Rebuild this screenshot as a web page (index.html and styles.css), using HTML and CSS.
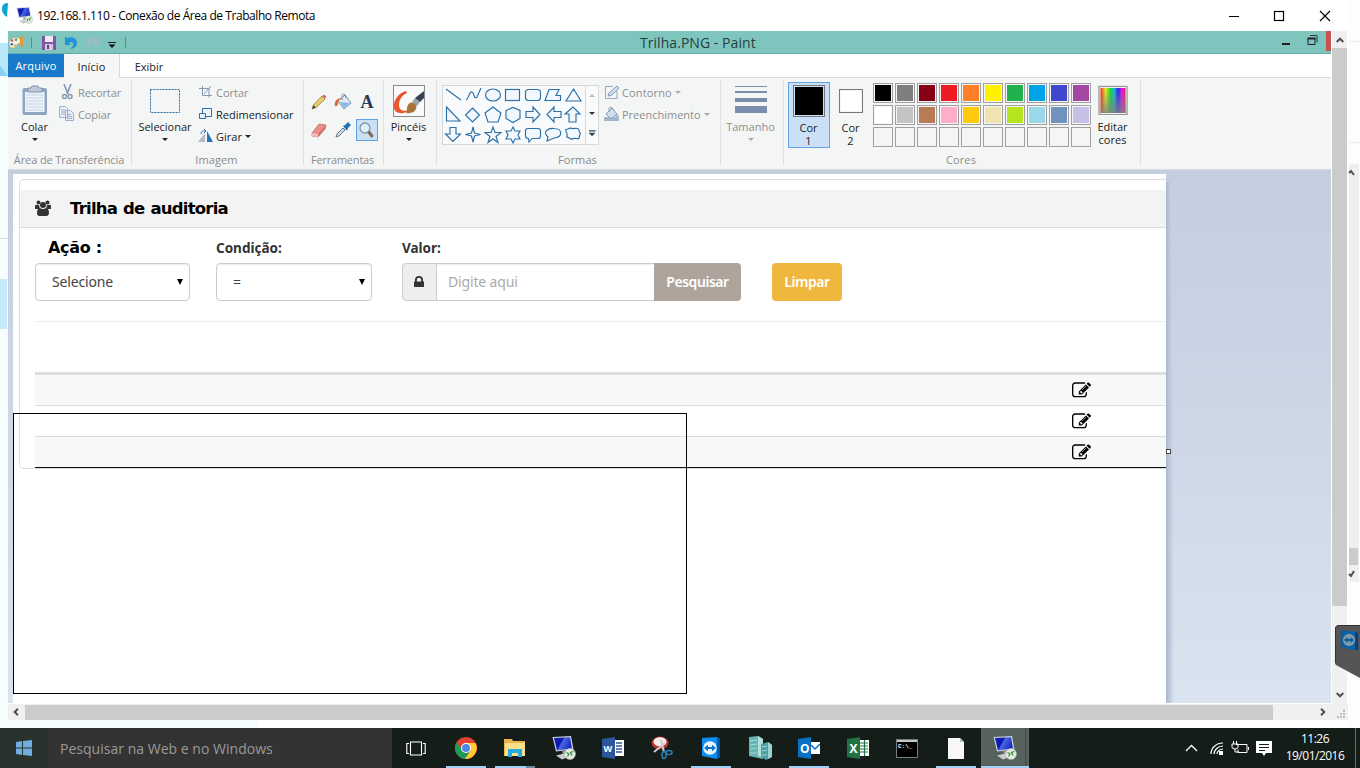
FILE: index.html
```html
<!DOCTYPE html>
<html lang="pt-BR">
<head>
<meta charset="utf-8">
<title>192.168.1.110 - Conexão de Área de Trabalho Remota</title>
<link rel="stylesheet" href="styles.css">
</head>
<body>
<svg class="defs" width="0" height="0">
  <defs>
    <linearGradient id="screen" x1="0" y1="0" x2="1" y2=".4"><stop offset="0" stop-color="#1226a8"/><stop offset=".45" stop-color="#0c17b4"/><stop offset=".55" stop-color="#4a68e0"/><stop offset="1" stop-color="#1a2fc4"/></linearGradient>
    <linearGradient id="rainbow" x1="0" x2="1" y1="0" y2="0"><stop offset="0" stop-color="#f21"/><stop offset=".2" stop-color="#ee2"/><stop offset=".4" stop-color="#1d3"/><stop offset=".55" stop-color="#1bd"/><stop offset=".7" stop-color="#22e"/><stop offset=".87" stop-color="#e1e"/><stop offset="1" stop-color="#f13"/></linearGradient>
    <linearGradient id="fade" x1="0" x2="0" y1="0" y2="1"><stop offset="0" stop-color="#808080" stop-opacity="0"/><stop offset="1" stop-color="#808080" stop-opacity=".85"/></linearGradient>
    <symbol id="rdp" viewBox="0 0 24 24">
      <path d="M.5 1L19 0l2.500 13.500L4 15.500z" fill="#c9cfde"/><path d="M2 2l16-.8 2 11.300-15 1.700z" fill="url(#screen)"/>
      <path d="M10 15l6-1 1 4-6 1z" fill="#8d9198"/><path d="M4 19.500l10-2.500 5 3-9 3.500z" fill="#c9cbd0"/>
      <circle cx="18" cy="18" r="5.500" fill="#e3eadf" stroke="#aab5a6" stroke-width=".5"/><path d="M14.500 16.500l2.500 1.500-1.500 2.500M21.500 15.500l-3 1 1.500 3" fill="none" stroke="#30913d" stroke-width="1.300"/>
    </symbol>
    <symbol id="tv" viewBox="0 0 20 22">
      <path d="M1 1l15-1 3 2v18l-3 2-15-3z" fill="#0c8ff0"/><path d="M16 0l3 2v18l-3 2z" fill="#0556ab"/><circle cx="9" cy="11" r="6.800" fill="#e9f3fc"/>
      <path d="M3 11l4-3.300v2.200h4V7.700l4 3.300-4 3.300v-2.200H7v2.200z" fill="#0c72cc"/>
    </symbol>
    <symbol id="edit" viewBox="0 0 1792 1792"><path d="M888 1184l116-116-152-152-116 116v56h96v96h56zm440-720q-16-16-33 1l-350 350q-17 17-1 33t33-1l350-350q17-17 1-33zm80 594v190q0 119-84.500 203.500t-203.500 84.500h-832q-119 0-203.500-84.500t-84.500-203.500v-832q0-119 84.500-203.500t203.500-84.500h832q63 0 117 25 15 7 18 23 3 17-9 29l-49 49q-14 14-32 8-23-6-45-6h-832q-66 0-113 47t-47 113v832q0 66 47 113t113 47h832q66 0 113-47t47-113v-126q0-13 9-22l64-64q15-15 35-7t20 29zm-96-738l288 288-672 672h-288v-288zm444 132l-92 92-288-288 92-92q28-28 68-28t68 28l152 152q28 28 28 68t-28 68z"/></symbol>
    <symbol id="chev" viewBox="0 0 8 6"><path d="M.7 5L4 1.700 7.300 5" fill="none" stroke="#505050" stroke-width="2"/></symbol>
  </defs>
</svg>
<div class="desktop">
  <aside class="left-edge">
    <svg width="8" height="728"><rect width="8" height="728" fill="#f5fdfe"/><path d="M0 0h8v42H0z" fill="#fbfefe"/><path d="M8 3c-5 0-6 3-6 6 0 4 2 6 5 8z" fill="#0ba5d9"/><path d="M0 43h8v33l-3-4-5-7z" fill="#b6e8fa"/><path d="M0 65l8 11H0z" fill="#86d3f2"/><path d="M0 238.500h8" stroke="#d5e3e6"/><rect y="279" width="7" height="50" fill="#c5ebfb"/></svg>
  </aside>

  <section class="remote">
    <header class="remote-bar">
      <svg class="remote-icon" width="17" height="17"><use href="#rdp"/></svg>
      <span class="remote-title">192.168.1.110 - Conexão de Área de Trabalho Remota</span>
      <svg class="remote-buttons" width="104" height="12"><path d="M1 6.500h10" stroke="#000"/><rect x="46.500" y="1.500" width="9" height="9" fill="none" stroke="#000" stroke-width="1.200"/><path d="M92 1l10 10M102 1L92 11" stroke="#000" stroke-width="1.200"/></svg>
    </header>
    <div class="remote-body">
      <main class="paint">
        <header class="paint-bar">
          <svg class="quick" width="120" height="22">
            <path d="M1 13C1 8 5 6 9 6.500c3 .5 5 3 4 5-1 2-3 .5-4 2-.5 2-1 3.500-4 3.500s-4-2-4-4z" fill="#f1eee5" stroke="#b3a685" stroke-width=".7"/><circle cx="4" cy="9.500" r="1.300" fill="#e4533d"/><circle cx="8" cy="8.800" r="1.300" fill="#43a845"/><circle cx="3.800" cy="13.300" r="1.300" fill="#4668c7"/><circle cx="7" cy="14.800" r="1.200" fill="#dcb52c"/><path d="M12 7l2-3 1 3v6l-1 4-2-3z" fill="#ec962e"/>
            <path d="M23.500 6v11M117.500 6v11" stroke="#5c8d88"/>
            <path d="M34 5h14v14H34z" fill="#7d57a3"/><path d="M37 5h8v6h-8z" fill="#eee9f5"/><path d="M37 13h8v6h-8z" fill="#d4c8e2"/><path d="M39 14h2v4h-2z" fill="#60418a"/>
            <path d="M57 11V5l2 2c5-2 10 0 10 5 0 3-3 6-7 6 4-3 5-7 0-7l-1 1 2 2h-6z" fill="#2293d8"/>
            <path d="M91 11V5l-2 2c-5-2-10 0-10 5 0 3 2 5 4 6-1-4-1-7 3-7l1 1-2 2h6z" fill="#9cbcc4"/>
            <path d="M100 11.500h8" stroke="#222"/><path d="M100.500 13.500h7l-3.500 3.500z" fill="#111"/>
          </svg>
          <span class="paint-title">Trilha.PNG - Paint</span>
          <svg class="paint-buttons" width="49" height="20"><path d="M0 12h8v2H0z" fill="#222"/><path d="M28 4.500h7v7" fill="none" stroke="#2a3f3d"/><path d="M26 7.500h7v6h-7z" fill="none" stroke="#222"/><path d="M25.500 7.500h8" stroke="#222" stroke-width="2"/><path d="M44 0h5v20h-5z" fill="#c75050"/></svg>
        </header>
        <nav class="tabs"><span class="tab file">Arquivo</span><span class="tab home">Início</span><span class="tab view">Exibir</span></nav>

        <div class="ribbon">
          <section class="group clip">
            <div class="group-body">
              <div class="big"><svg width="27" height="32"><rect x="1.500" y="3" width="24.500" height="27" rx="2" fill="#8fa3c3"/><path d="M4 7h19.500v20H4z" fill="#eef3fa"/><path d="M5 10h17M5 13h17M5 16h17M5 19h17M5 22h17M5 25h17" stroke="#c3d2e6"/><path d="M7 3h3l1-2h6l1 2h3v4H7z" fill="#bfc9d9" stroke="#8292ad"/></svg><span>Colar</span><i class="caret"></i></div>
              <ul class="small-list">
                <li class="off"><svg width="16" height="16"><path d="M5 0l4 10M12 0L8 10" stroke="#8699b5" stroke-width="1.700"/><circle cx="5.500" cy="12.500" r="2" fill="none" stroke="#8699b5" stroke-width="1.500"/><circle cx="11" cy="12.500" r="2" fill="none" stroke="#8699b5" stroke-width="1.500"/></svg><span>Recortar</span></li>
                <li class="off"><svg width="16" height="16"><path d="M.5.500h6l2 2v9h-8zM6.500 4.500h5l3 3v7h-8z" fill="#eaf0f8" stroke="#9baec9"/><path d="M2 4h4M2 6h4M2 8h4M8 8.500h4M8 10.500h5M8 12.500h5" stroke="#9baec9"/></svg><span>Copiar</span></li>
              </ul>
            </div>
            <footer class="transfer">Área de Transferência</footer>
          </section>

          <section class="group image">
            <div class="group-body">
              <div class="big sel"><svg width="32" height="32"><rect x=".5" y="4.500" width="29" height="23" fill="none" stroke="#2f6ea5" stroke-dasharray="2 1"/></svg><span>Selecionar</span><i class="caret"></i></div>
              <ul class="small-list">
                <li class="off"><svg width="16" height="16"><path d="M1 4.500h10v9M4.500 2v9.500H14M6 10l7-8" fill="none" stroke="#8498b8"/></svg><span>Cortar</span></li>
                <li><svg width="16" height="16"><path d="M4.500 2.500h9v8h-9z" fill="#eef6fc" stroke="#2d71ab"/><path d="M1.500 7.500h6v5h-6z" fill="#eef6fc" stroke="#2d71ab"/></svg><span>Redimensionar</span></li>
                <li><svg width="16" height="16"><path d="M0 14L7 5v9z" fill="#b1bac5"/><path d="M9 3l6 11H9z" fill="#2276b3"/><path d="M3 6c0-3 2-3 4-3M6 1l2 2-2 2" fill="none" stroke="#297bbb"/></svg><span>Girar</span><i class="caret"></i></li>
              </ul>
            </div>
            <footer>Imagem</footer>
          </section>

          <section class="group tools">
            <div class="group-body tool-grid">
              <svg width="18" height="18"><path d="M2 16l1.500-4L12 3l3 3-9 8.500z" fill="#efcc6b" stroke="#8b743f" stroke-width=".8"/><path d="M12 3l2-1.500 2.500 2L15 6z" fill="#d6756a"/><path d="M2 16l1.500-4 2.500 2.500z" fill="#554b3c"/></svg>
              <svg width="18" height="18"><path d="M4 8l7-6 6 8-7 6z" fill="#dfe8f1" stroke="#6d86a2" stroke-width=".9"/><path d="M8 7V3q0-2 2-2t2 4" fill="none" stroke="#7c93ac"/><path d="M1 13c-1-5 2-8 7-8-3 1-4 3-4 6-.5 1-1 3-3 2z" fill="#e16638"/><path d="M6 9l10 1-6 5z" fill="#83bcec"/></svg>
              <span class="letter">A</span>
              <svg width="18" height="18"><path d="M2 12L9 3l7 1-1 4-7 8-6-1z" fill="#ed8e88" stroke="#b5665f" stroke-width=".7"/><path d="M2 12l6 1v3l-6-1z" fill="#f5bfba"/><path d="M8 13l8-9-1 4-7 8z" fill="#cf716b"/></svg>
              <svg width="18" height="18"><path d="M2 16l1-3 6-6 2 2-6 6z" fill="#d2dae3" stroke="#60788f"/><path d="M9 5l2-1 3-3 3 3-3 3-1 3z" fill="#2774b6"/></svg>
              <span class="zoom-on"><svg width="18" height="18"><circle cx="7" cy="7" r="5" fill="#dcefff" stroke="#8895a2" stroke-width="1.300"/><path d="M10.500 10.500l4 5.500" stroke="#836a58" stroke-width="3"/></svg></span>
            </div>
            <footer class="tools-label">Ferramentas</footer>
          </section>

          <section class="group brush">
            <div class="group-body"><div class="big"><svg width="32" height="32"><rect x=".5" y=".5" width="31" height="31" fill="#f9f9f9" stroke="#8a8a8a"/><path d="M13 6l1 2c-5 2-8 7-8 12 0 5 4 7 10 5-5 5-14 4-15-2C0 16 5 8 13 6z" fill="#e7562c"/><path d="M13 28c2-2 0-5 2-8s5-3 8-1c2 7-4 10-10 9z" fill="#a8743b"/><path d="M19 17l3-4 5 4-3 4z" fill="#9aa3aa"/><path d="M22 13l9-7v7l-4 4z" fill="#334152"/></svg><span>Pincéis</span><i class="caret"></i></div></div>
            <footer></footer>
          </section>

          <section class="group shapes">
            <div class="group-body">
              <div class="shape-box">
                <svg width="142" height="60" fill="#f2f8fd" stroke="#2b70a8" stroke-width="1.150">
                  <path d="M3 4l15 11M23 15c3-1 3-9 6-8s1 8 5 5l4-9" fill="none"/>
                  <ellipse cx="50" cy="10" rx="7.500" ry="6"/><rect x="62.500" y="4.500" width="14" height="11"/><rect x="82.500" y="4.500" width="15" height="11" rx="3"/><path d="M106 4.500h10l-3 6h4.500v5H102zM130.500 4l7.500 12h-15z"/>
                  <path d="M3.500 22v14H17zM29.500 23l7 7-7 7-7-7zM50 22l8 6-3 9H45l-3-9zM63 25.500l7-3 7 3v8l-7 4-7-4zM83 26.500h7V22l7 7.500-7 7.500v-4.500h-7zM118 26.500h-7V22l-7 7.500 7 7.500v-4.500h7zM130 22l7 7h-4v8h-7v-8h-4z"/>
                  <path d="M7 42.500h6V49h4.500L10 56.500 2.500 49H7zM30 42l1.500 6 6 1.500-6 1.500-1.500 6-1.500-6-6-1.500 6-1.500zM50 42l2 5.500h6l-5 4 2 6-5-3.500-5 3.500 2-6-5-4h6zM70 42l2 4h5l-2 4 2 4h-5l-2 4-2-4h-5l2-4-2-4h5zM85 43.500h10q2.500 0 2.500 2.500v5q0 2.500-2.500 2.500h-6L86 57l-.5-3.500q-3 0-3-2.500v-5q0-2.500 2.500-2.500zM104 56l1-4c-6-5 0-9 6-8.500 9 0 9 9 0 9.500zM125 44c3-2 4 0 6-.5s5 0 5 2 2 2 1 4 0 5-4 4-4 2-6 0-4 0-3-3-2-3-1-6z"/>
                </svg>
                <div class="shape-scroll"><i class="up"></i><i class="down"></i><i class="more"></i></div>
              </div>
              <ul class="small-list">
                <li class="off"><svg width="16" height="16"><path d="M13 7v7.500H1.500v-12H9" fill="none" stroke="#97a9c4"/><path d="M4 12l1-3 8-7 2 2-7 7z" fill="#d5deeb" stroke="#8196b8"/></svg><span class="outline-label">Contorno</span><i class="caret"></i></li>
                <li class="off"><svg width="16" height="16"><path d="M2 8l6-6 5 6-6 5z" fill="#d5dfec" stroke="#8196b8"/><path d="M5 6V3c0-3 4-2 4 1" fill="none" stroke="#8196b8"/><path d="M0 11h15v4H0zM13 7l2 4h-3z" fill="#a4b5d0"/></svg><span>Preenchimento</span><i class="caret"></i></li>
              </ul>
            </div>
            <footer>Formas</footer>
          </section>

          <section class="group size">
            <div class="group-body"><div class="big off"><svg width="32" height="32" fill="#7a8dad"><path d="M0 1h32v1H0zM0 6h32v2H0zM0 13h32v4H0zM0 21h32v7H0z"/></svg><span>Tamanho</span><i class="caret"></i></div></div>
            <footer></footer>
          </section>

          <section class="group colors">
            <div class="group-body">
              <div class="pick active"><b class="chip black"></b><span>Cor<br>1</span></div>
              <div class="pick"><b class="chip white"></b><span>Cor<br>2</span></div>
              <div class="palette">
                <i class="c0"></i><i class="c1"></i><i class="c2"></i><i class="c3"></i><i class="c4"></i><i class="c5"></i><i class="c6"></i><i class="c7"></i><i class="c8"></i><i class="c9"></i>
                <i class="d0"></i><i class="d1"></i><i class="d2"></i><i class="d3"></i><i class="d4"></i><i class="d5"></i><i class="d6"></i><i class="d7"></i><i class="d8"></i><i class="d9"></i>
                <i></i><i></i><i></i><i></i><i></i><i></i><i></i><i></i><i></i><i></i>
              </div>
              <div class="edit-colors"><svg width="30" height="30"><rect x="1" y="1.500" width="28" height="28" fill="#fff" stroke="#959595" stroke-width="1.300"/><path d="M2.500 3h25v25h-25z" fill="url(#rainbow)"/><path d="M2.500 3h25v25h-25z" fill="url(#fade)"/></svg><span>Editar<br>cores</span></div>
            </div>
            <footer>Cores</footer>
          </section>
        </div>

        <div class="workspace">
          <div class="picture">
            <section class="panel">
              <header class="panel-head"><svg width="16" height="17" fill="#333"><circle cx="3.500" cy="2.500" r="2"/><circle cx="12.500" cy="2.500" r="2"/><circle cx="8" cy="5" r="3"/><path d="M0 9V6q0-1.500 2-1.300 1 .6 2.200.4Q4 7 5 8.200q-1.500 0-2 .8zM16 9V6q0-1.500-2-1.300-1 .6-2.200.4.200 1.900-.8 3.100 1.500 0 2 .8zM2 13c0-3 1-5 3-5 1.500 1.300 4.500 1.300 6 0 2 0 3 2 3 5 0 1.500-1 3-2.500 3h-7Q2 16 2 13z"/></svg><h1>Trilha de auditoria</h1></header>
              <form class="filters">
                <div class="field action"><label>Ação :</label><div class="select"><span>Selecione</span><i></i></div></div>
                <div class="field condition"><label>Condição:</label><div class="select"><span>=</span><i></i></div></div>
                <div class="field value"><label>Valor:</label>
                  <div class="input-group"><span class="addon"><svg width="10" height="12" fill="#333"><path d="M0 5.500h1V4q0-4 4-4t4 4v1.500h1V11H0zM2.800 5.500h4.400V4q0-2.200-2.200-2.200T2.800 4z"/></svg></span><span class="input">Digite aqui</span><span class="btn search">Pesquisar</span></div>
                </div>
                <span class="btn clear">Limpar</span>
              </form>
              <div class="rule"></div>
              <div class="rows">
                <div class="row odd"><svg width="19" height="19"><use href="#edit"/></svg></div>
                <div class="row"><svg width="19" height="19"><use href="#edit"/></svg></div>
                <div class="row odd last"><svg width="19" height="19"><use href="#edit"/></svg></div>
              </div>
            </section>
            <div class="selection"></div>
            <i class="handle"></i>
          </div>
          <div class="picture-shadow"></div>
        </div>
      </main>
      <div class="vscroll"><svg width="8" height="6"><use href="#chev"/></svg><div class="vthumb"></div><svg class="flip" width="8" height="6"><use href="#chev"/></svg></div>
    </div>
    <div class="hscroll"><svg class="ccw" width="8" height="6"><use href="#chev"/></svg><div class="hthumb"></div><svg class="cw" width="8" height="6"><use href="#chev"/></svg><svg class="grip" width="10" height="10" fill="#bcbcbc"><path d="M6 0h2v2H6zM3 3h2v2H3zM6 3h2v2H6zM0 6h2v2H0zM3 6h2v2H3zM6 6h2v2H6z"/></svg></div>
    <div class="below"></div>
  </section>

  <aside class="right-edge">
    <svg width="12" height="728"><rect width="12" height="728" fill="#fdfdfd"/><path d="M1 41.500h11M1 142.500h11" stroke="#e8ecec"/><path d="M1 164h10v418H1z" fill="#efefef"/><path d="M1 548h9v17H1z" fill="#cbcbcb"/><path d="M1 173l2-2 3 4M1 574l2 2 3-5" stroke="#505050" stroke-width="2" fill="none"/></svg>
    <div class="tv-tab"><svg width="25" height="53"><path d="M3 0h22v53L1 40Q0 39 0 38V3z" fill="#555"/><path d="M.5 38V3q0-2 2.500-2.500h22" fill="none" stroke="#333"/></svg><svg class="tv-small" width="19" height="22" viewBox="0 0 20 22"><path d="M1 1l15 1 3 2v17l-3 1-15-4z" fill="#0662a8"/><path d="M16 2l3 2v17l-3 1z" fill="#08407c"/><circle cx="9.500" cy="11" r="6.500" fill="#7f96a5"/><path d="M4 11l4-3v2h3V8l4 3-4 3v-2H8v2z" fill="#0760a5"/></svg></div>
  </aside>
</div>

<footer class="taskbar">
  <div class="start"><svg width="16" height="16" fill="#70acdd"><path d="M0 2l6-1v6.500H0zM7 .9L16 0v7.500H7zM0 8.500h6V15l-6-1zM7 8.500h9V16l-9-.9z"/></svg></div>
  <div class="search-box">Pesquisar na Web e no Windows</div>
  <div class="apps">
    <div class="app views"><svg width="20" height="15" fill="none" stroke="#fff" stroke-width="1.100"><path d="M4.500 1h11v13h-11zM3 2.500H.8v10H3M17 2.500h2.200v10H17"/></svg></div>
    <div class="app open"><svg width="22" height="22"><circle cx="11" cy="11" r="11" fill="#e34133"/><path d="M1.500 5.500A11 11 0 0 0 10 22l5-8.500-8-1z" fill="#1b9c54"/><path d="M20.500 6H11l4.500 7.500L10 22A11 11 0 0 0 20.500 6z" fill="#fccb35"/><circle cx="11" cy="11" r="5" fill="#fff"/><circle cx="11" cy="11" r="4" fill="#4a88ec"/></svg></div>
    <div class="app open multi"><svg width="22" height="20"><path d="M0 1h8l1 2h12v15H0z" fill="#e9b44d"/><path d="M1 5h20v13H1z" fill="#fbe08b"/><path d="M4 19v-8h14v8h-4v-4H8v4z" fill="#2aaae2"/></svg></div>
    <div class="app"><svg width="24" height="24"><use href="#rdp"/></svg></div>
    <div class="app"><svg width="22" height="22"><path d="M12 3h10v16H12z" fill="#fff"/><path d="M14 6h6M14 9h6M14 12h6M14 15h6" stroke="#2b5797" stroke-width="1.500"/><path d="M0 2l13-2v22L0 20z" fill="#2b579a"/><text x="1.500" y="15" class="mark">W</text></svg></div>
    <div class="app"><svg width="22" height="24"><ellipse cx="9" cy="7" rx="8.500" ry="6.500" fill="#c5312d"/><ellipse cx="9" cy="5.800" rx="6.500" ry="4.500" fill="#f4eeec"/><path d="M3 16l11-9M10 4l3 12" stroke="#c9cbd0" stroke-width="2"/><ellipse cx="13" cy="19" rx="2" ry="3.500" fill="none" stroke="#2882b7" stroke-width="1.500"/><ellipse cx="18" cy="16.500" rx="3" ry="2" fill="none" stroke="#2882b7" stroke-width="1.500"/></svg></div>
    <div class="app open"><svg width="20" height="22"><use href="#tv"/></svg></div>
    <div class="app"><svg width="24" height="24"><path d="M1 1l9-1 5 3v20l-14-3z" fill="#66b5b5"/><path d="M10 0l5 3v19l-5-2z" fill="#b3dfdd"/><path d="M13 8l7-2 4 3v12l-6 3-5-3z" fill="#4b9ea3"/><path d="M20 6l4 3v12l-4 2z" fill="#9dd3d2"/><path d="M2 5l7-1M2 9l7-1M2 13l7-1M2 17l7 0M14 11l5-1M14 15l5-1M14 19l5 0" stroke="#a5d6d5"/></svg></div>
    <div class="app open"><svg width="22" height="22"><path d="M12 5h10v12H12z" fill="#fff"/><path d="M13 8l4 4 5-5" fill="none" stroke="#0872c6" stroke-width="1.500"/><path d="M0 2l13-2v22L0 20z" fill="#0872c6"/><text x="2" y="15.500" class="mark big-mark">O</text></svg></div>
    <div class="app"><svg width="22" height="22"><path d="M12 3h10v16H12z" fill="#fff"/><path d="M13 6h8M13 9h8M13 12h8M13 15h8M17.500 3v16" stroke="#217346" stroke-width="1.200"/><path d="M0 2l13-2v22L0 20z" fill="#217346"/><text x="2.500" y="15.500" class="mark big-mark">X</text></svg></div>
    <div class="app"><svg width="22" height="19"><path d="M0 0h22v19H0z" fill="#777d80"/><path d="M1 1h20v2H1z" fill="#c4c8ca"/><path d="M1 3h20v15H1z" fill="#000"/><text x="2" y="9" class="prompt">C:\_</text></svg></div>
    <div class="app open"><svg width="16" height="21"><path d="M0 0h12l4 4v17H0z" fill="#f7f7f7"/><path d="M12 0v4h4z" fill="#bbb"/></svg></div>
    <div class="app open current"><svg width="24" height="24"><use href="#rdp"/></svg></div>
  </div>
  <div class="tray">
    <svg width="90" height="18" fill="none" stroke="#fff">
      <path d="M1 12l5.500-5.500L12 12" stroke-width="1.300"/>
      <path d="M26 15C26 9 31 4 38 4M29 15c0-4 4-8 9-8M32 15c0-3 3-5 6-5" stroke-width="1.200"/><rect x="34.500" y="12.500" width="3" height="3" fill="#fff"/>
      <path d="M51 5.500h11v8h-9v-3M63.500 8v3M47 5h6v3q0 2-3 2t-3-2zM48.500 2v3M51.500 2v3M50 10v3h4"/>
      <path d="M71 2h16v12h-6l-2 3-2-3h-6z" fill="#fff" stroke="none"/><path d="M74 5.500h10M74 8.500h10M74 11.500h6" stroke="#141d18"/>
    </svg>
    <div class="clock"><span>11:26</span><span>19/01/2016</span></div>
    <i class="peek"></i>
  </div>
</footer>
</body>
</html>
```
FILE: styles.css
```css
* { box-sizing: border-box; }
body { margin: 0; width: 1360px; height: 768px; overflow: hidden; font-family: "Open Sans", "Noto Sans", sans-serif; font-size: 11px; color: #222; background: #fff; }
h1, ul { margin: 0; padding: 0; list-style: none; font-weight: normal; }
svg { display: block; flex: none; }
span { white-space: nowrap; }
.defs { position: absolute; }
.desktop { display: grid; grid-template-columns: 8px 1340px 12px; height: 728px; }

/* Remote desktop window */
.remote { display: flex; flex-direction: column; background: #fff; min-width: 0; }
.remote-bar { height: 31px; display: flex; align-items: center; padding: 0 16px 0 8px; }
.remote-icon { margin-right: 4px; }
.remote-title { font-size: 12px; letter-spacing: -.44px; color: #000; }
.remote-buttons { margin-left: auto; }
.remote-body { display: flex; height: 673px; }
.paint { width: 1323px; height: 672px; display: flex; flex-direction: column; overflow: hidden; }
.vscroll { width: 15px; margin-left: 1px; background: #f0f0f0; display: flex; flex-direction: column; align-items: center; padding-top: 6px; }
.vthumb { width: 15px; height: 558px; margin: 5px 0 86px; background: #cbcbcb; }
.flip { transform: rotate(180deg); }
.cw { transform: rotate(90deg); }
.ccw { transform: rotate(-90deg); }
.hscroll { height: 16px; background: #f0f0f0; display: flex; align-items: center; padding-left: 4px; }
.hthumb { width: 1248px; height: 15px; margin: 0 46px 0 5px; background: #cbcbcb; }
.grip { margin: 6px 0 0 10px; }
.below { flex: 1; background: linear-gradient(90deg, #f5fdfe 249px, #fff 249px); }

/* Paint title and tabs */
.paint-bar { height: 23px; flex: none; background: #7ec5be; border-bottom: 1px solid #68aca6; display: flex; align-items: center; }
.paint-title { margin-left: 512px; font-size: 14px; letter-spacing: .05px; color: #28403e; }
.paint-buttons { margin: 0 0 2px auto; }
.tabs { height: 24px; flex: none; display: flex; background: #fff; border-bottom: 1px solid #dadbdc; font-size: 11px; }
.tab { height: 23px; display: flex; align-items: center; justify-content: center; }
.file { width: 56px; background: #1979ca; color: #fff; letter-spacing: .2px; }
.home { width: 56px; height: 24px; background: #f5f6f7; border-right: 1px solid #dadbdc; letter-spacing: .1px; }
.view { width: 58px; padding-top: 2px; }

/* Ribbon */
.ribbon { height: 92px; flex: none; display: flex; background: #f4f6f5; border-bottom: 1px solid #d9dcdf; padding: 2px 0 4px; }
.group { display: flex; flex-direction: column; border-right: 1px solid #dfe1e2; }
.group-body { display: flex; height: 71px; }
.group footer { height: 15px; line-height: 19px; padding-right: 2px; text-align: center; color: #8b8b8b; letter-spacing: .1px; white-space: nowrap; }
.group .transfer { letter-spacing: -.1px; padding-right: 1px; }
.group .tools-label { letter-spacing: -.2px; }
.clip { width: 124px; } .image { width: 172px; } .tools { width: 80px; } .brush { width: 53px; }
.shapes { width: 284px; } .size { width: 63px; } .colors { width: 357px; }
.big { display: flex; flex-direction: column; align-items: center; padding-top: 5px; width: 53px; }
.big span { line-height: 18px; margin-top: 1px; }
.sel { width: 66px; }
.sel svg { margin-left: 1px; }
.caret { border: 3px solid transparent; border-top-color: currentColor; border-bottom: 0; margin-top: 2px; }
.small-list { padding-top: 1px; }
.clip .small-list { margin-left: -2px; }
.clip .small-list li { gap: 3px; letter-spacing: -.1px; }
.small-list li { height: 22px; display: flex; align-items: center; gap: 2px; }
.small-list .caret { margin: 0 0 0 1px; }
.off { color: #8d8d8d; }
.off .caret { color: #aaa; }
.outline-label { letter-spacing: .15px; }
.tool-grid { display: grid; grid-template-columns: 24px 24px 24px; grid-template-rows: 28px 28px; padding: 8px 0 0 3px; justify-items: center; align-items: center; }
.letter { font: bold 18px/20px "Liberation Serif", serif; color: #253b59; }
.zoom-on { width: 22px; height: 22px; margin: 0 0 1px; display: grid; place-items: center; background: #c9e0f7; border: 1px solid #62a2e4; }
.brush .big { width: 49px; }
.shape-box { display: flex; width: 157px; height: 60px; border: 1px solid #d5d7d9; margin: 5px 5px 0 5px; background: #f9fafb; }
.shape-box > svg { margin-top: -1px; }
.shape-scroll { width: 13px; border-left: 1px solid #d5d7d9; display: flex; flex-direction: column; align-items: center; justify-content: space-around; }
.shape-scroll i { border: 3px solid transparent; }
.shape-scroll .up { border-bottom-color: #b8bdc2; border-top-width: 0; }
.shape-scroll .down { border-top-color: #333; border-bottom-width: 0; }
.shape-scroll .more { border: 0; width: 7px; height: 6px; background: #345; clip-path: polygon(0 0, 100% 0, 100% 18%, 0 18%, 0 40%, 100% 40%, 50% 100%, 0 40%); }
.size .big { width: 59px; }
.pick { width: 42px; height: 66px; margin-top: 2px; display: flex; flex-direction: column; align-items: center; text-align: center; line-height: 13px; }
.pick.active { margin-left: 4px; background: #c9e0f7; border: 1px solid #62a2e4; }
.chip { border: 1px solid #777; padding: 1px; background-clip: content-box; }
.black { width: 32px; height: 32px; margin: 2px 0 4px; background-color: #000; }
.white { width: 24px; height: 24px; margin: 7px 0 8px; background-color: #fff; }
.pick > span { padding-right: 1px; }
.palette { display: grid; grid-template-columns: repeat(10, 20px); grid-auto-rows: 20px; gap: 2px; margin: 3px 0 0 1px; }
.palette i { border: 1px solid #a0a0a0; padding: 1px; background-clip: content-box; }
.c0 { background-color: #000; } .c1 { background-color: #7f7f7f; } .c2 { background-color: #880015; } .c3 { background-color: #ed1c24; } .c4 { background-color: #ff7f27; }
.c5 { background-color: #fff200; } .c6 { background-color: #22b14c; } .c7 { background-color: #00a2e8; } .c8 { background-color: #3f48cc; } .c9 { background-color: #a349a4; }
.d0 { background-color: #fff; } .d1 { background-color: #c3c3c3; } .d2 { background-color: #b97a57; } .d3 { background-color: #ffaec9; } .d4 { background-color: #ffc90e; }
.d5 { background-color: #efe4b0; } .d6 { background-color: #b5e61d; } .d7 { background-color: #99d9ea; } .d8 { background-color: #7092be; } .d9 { background-color: #c8bfe7; }
.edit-colors { width: 43px; padding-top: 5px; display: flex; flex-direction: column; align-items: center; text-align: center; line-height: 13px; }
.edit-colors span { margin-top: 5px; }

/* Opened picture */
.workspace { flex: 1; display: flex; padding: 4px 0 0 5px; background: linear-gradient(#c4cedf, #ced7e6 50%, #dae4f0); }
.picture { position: relative; width: 1153px; background: #fff; }
.picture-shadow { width: 8px; margin-top: 8px; background: linear-gradient(90deg, #a9b8ce, #c3cfdf 60%, transparent); }
.panel { margin: 5px 0 0 6px; height: 290px; border: 1px solid #ddd; border-right: 0; border-radius: 5px 0 0 5px; padding-top: 10px; }
.panel-head { height: 38px; display: flex; align-items: center; gap: 19px; padding-left: 15px; background: #f3f3f3; border-bottom: 1px solid #ddd; }
h1 { font: bold 16.5px "DejaVu Sans", sans-serif; letter-spacing: -.78px; word-spacing: 1px; color: #000; white-space: nowrap; }
.filters { display: flex; align-items: flex-end; height: 73px; padding-left: 15px; font-family: "Noto Sans", sans-serif; font-size: 14px; line-height: 17px; color: #444; }
.field { display: flex; flex-direction: column; }
label { height: 32px; line-height: 34px; font-weight: bold; font-size: 13.500px; color: #333; letter-spacing: 0; white-space: nowrap; }
.action label { padding-left: 13px; font: bold 16px/34px "DejaVu Sans", sans-serif; color: #000; letter-spacing: -.3px; }
.action .select { width: 155px; letter-spacing: -.15px; }
.condition { margin-left: 26px; }
.condition .select { width: 156px; }
.select { height: 38px; display: flex; align-items: center; justify-content: space-between; padding: 0 6px 1px 16px; border: 1px solid #ccc; border-radius: 4px; box-shadow: inset 0 1px 1px #eee; }
.select i { border: 3px solid transparent; border-top: 6px solid #000; border-bottom: 0; }
.value { margin-left: 30px; }
.input-group { display: flex; height: 38px; }
.addon { width: 35px; display: grid; place-items: center; padding-right: 1px; background: #eee; border: 1px solid #ccc; border-radius: 4px 0 0 4px; }
.input { width: 217px; display: flex; align-items: center; padding: 0 0 1px 11px; border: solid #ccc; border-width: 1px 0; color: #aaa; letter-spacing: -.15px; box-shadow: inset 0 1px 1px #eee; }
.btn { height: 38px; display: grid; place-items: center; padding-bottom: 1px; color: #fff; font-weight: 600; letter-spacing: -.45px; }
.search { width: 87px; background: #aea49c; border-radius: 0 4px 4px 0; }
.clear { width: 70px; margin-left: 31px; background: #efb73e; border-radius: 4px; }
.rule { height: 1px; margin: 20px 0 50px 15px; background: #eee; }
.rows { margin-left: 15px; border-top: 3px solid #ddd; }
.row { height: 31px; display: flex; align-items: flex-start; padding: 6px 0 0 1037px; border-bottom: 1px solid #ddd; }
.odd { background: #f8f8f8; }
.last { border-color: #111; }
.selection { position: absolute; left: 0; top: 239px; width: 674px; height: 281px; border: 1px solid #000; }
.handle { position: absolute; left: 1153px; top: 275px; width: 5px; height: 5px; background: #fff; border: 1px solid #444; }
.right-edge { position: relative; }
.tv-tab { position: absolute; left: -13px; top: 625px; }
.tv-small { position: absolute; left: 5px; top: 4px; }

/* Taskbar */
.taskbar { height: 40px; display: flex; background: #141d18; }
.start { width: 48px; display: grid; place-items: center; background: #28332d; }
.search-box { width: 344px; padding-left: 12px; line-height: 41px; background: #333; color: #999; font-size: 14px; letter-spacing: .02px; white-space: nowrap; }
.apps { display: flex; }
.app { width: 49px; display: grid; place-items: center; }
.views { padding-right: 1px; }
.open { background: linear-gradient(#9fd0f8, #9fd0f8) right 4px bottom / 40px 2px no-repeat; }
.multi { background: linear-gradient(90deg, #9fd0f8 31px, #70889c 31px) right 4px bottom / 40px 2px no-repeat; }
.current { width: 48px; margin-left: 1px; background: linear-gradient(#9fd0f8, #9fd0f8) center bottom / 100% 2px no-repeat, linear-gradient(90deg, #56625c 44px, #3c4842 44px, #56625c 46px); }
.mark { font: bold 9px "Open Sans", sans-serif; fill: #fff; }
.big-mark { font-size: 12px; }
.prompt { font: bold 6px "Liberation Mono", monospace; fill: #fff; }
.tray { margin-left: auto; display: flex; align-items: center; padding-right: 4px; color: #fff; }
.clock { width: 78px; margin-left: 2px; padding: 0 2px 2px 0; display: flex; flex-direction: column; align-items: center; font-size: 12px; line-height: 17px; letter-spacing: -.5px; }
.peek { width: 1px; height: 40px; background: #66706b; }
```
